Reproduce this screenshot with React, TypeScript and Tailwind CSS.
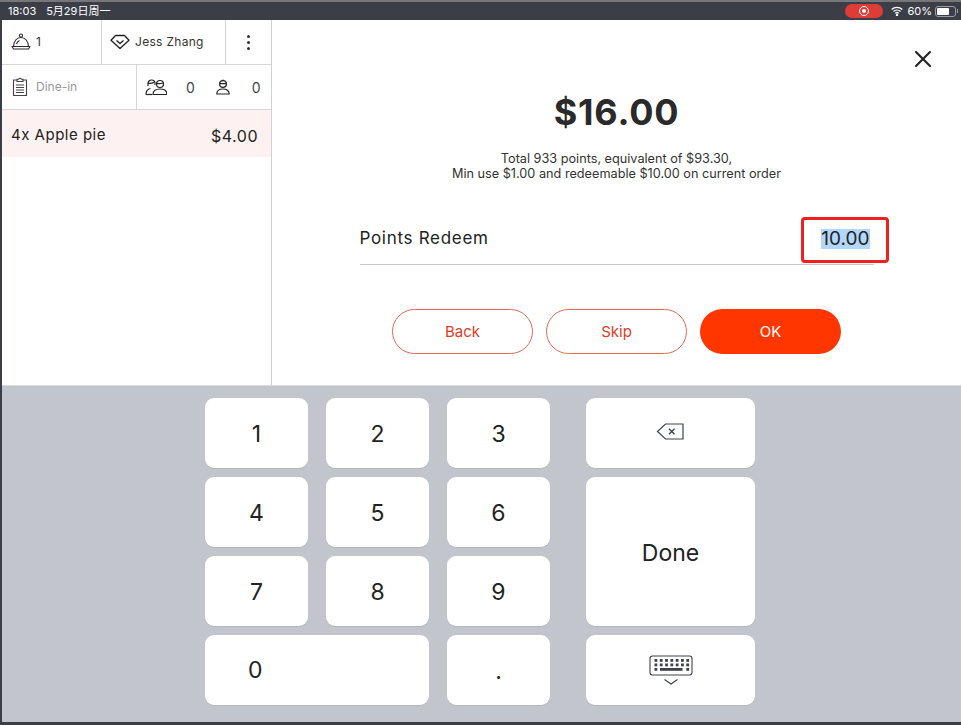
import type { ReactNode } from "react";
import { X } from "lucide-react";

const font = { fontFamily: "Inter, 'Noto Sans CJK SC', sans-serif" };

function Bell() {
  return (
    <svg width="20" height="18" viewBox="0 0 20 18" fill="none" stroke="#2b2b2b" strokeWidth="1.1">
      <circle cx="10" cy="2.6" r="1.6" />
      <path d="M2.5 13.5C3 8 6 4.5 10 4.5s7 3.5 7.5 9" />
      <path d="M1 13.5h18l-1.5 2.5h-15z" strokeLinejoin="round" />
      <path d="M5.5 11c.5-1.8 1.5-3 3-3.6" />
    </svg>
  );
}

function Diamond() {
  return (
    <svg width="20" height="16" viewBox="0 0 20 16" fill="none" stroke="#222" strokeWidth="1.3" strokeLinejoin="round">
      <path d="M5.5 1.5h9l4.5 4.8L10 14.5 1 6.3z" />
      <path d="M6.5 6.5 10 9.5l3.5-3" />
    </svg>
  );
}

function Clipboard() {
  return (
    <svg width="16" height="20" viewBox="0 0 16 20" fill="none" stroke="#444" strokeWidth="1.1">
      <path d="M5 3H1.5v15.5h13V3H11" />
      <path d="M5 3.5V2.2h1.6a1.5 1.5 0 0 1 2.8 0H11v2.3H5z" />
      <path d="M4 8h8M4 10.5h8M4 13h8M4 15.5h8" />
    </svg>
  );
}

function Guests() {
  return (
    <svg width="22" height="17" viewBox="0 0 22 17" fill="none" stroke="#222" strokeWidth="1.2">
      <path d="M3 7V4.5a3.5 3.5 0 0 1 7 0V6" />
      <path d="M3 4.2c2 .3 4 .1 6-1" />
      <path d="M1 15.5c0-3.5 1.5-5.5 4.5-6" />
      <path d="M1 15.5h6" />
      <circle cx="15" cy="5" r="3.5" />
      <path d="M11.7 4.4c1.5.2 4 .2 6.5-.4" />
      <path d="M8 15.5c0-3.5 2.5-5.5 7-5.5s7 2 7 5.5z" strokeLinejoin="round" />
    </svg>
  );
}

function Child() {
  return (
    <svg width="14" height="16" viewBox="0 0 14 16" fill="none" stroke="#222" strokeWidth="1.2">
      <circle cx="7" cy="5" r="3.4" />
      <circle cx="7" cy="1.2" r="0.8" fill="#222" stroke="none" />
      <path d="M3.8 4.4c1.5.3 4.5.3 6.4 0" />
      <path d="M.8 15c0-3.3 2.5-5 6.2-5s6.200 1.700 6.200 5z" strokeLinejoin="round" />
    </svg>
  );
}

function Backspace() {
  return (
    <svg width="28" height="17" viewBox="0 0 28 17" fill="none" stroke="#3d424c" strokeWidth="1.2">
      <path d="M27 1H9.5L1.500 8.500 9.500 16H27z" />
      <path d="M13 5.800l5.500 5.400M18.500 5.800 13 11.200" strokeWidth="1.4" />
    </svg>
  );
}

function KeyboardHide() {
  const rows = [0, 1];
  const cols = [0, 1, 2, 3, 4, 5, 6];
  return (
    <svg width="44" height="31" viewBox="0 0 44 31" fill="none">
      <rect x="1" y="1" width="42" height="19" rx="2.5" stroke="#3d424c" strokeWidth="1.1" />
      {rows.map((r) =>
        cols.map((c) => <rect key={`${r}-${c}`} x={5.5 + c * 5.3} y={4 + r * 4.5} width="2.8" height="2.8" fill="#3d424c" />),
      )}
      <rect x="5.5" y="13" width="2.8" height="2.8" fill="#3d424c" />
      <rect x="11" y="13" width="22.5" height="2.8" fill="#3d424c" />
      <rect x="37.3" y="13" width="2.8" height="2.8" fill="#3d424c" />
      <path d="M15.5 24.500 22 29l6.500-4.500" stroke="#3d424c" strokeWidth="1.1" />
    </svg>
  );
}

function Key({ children, className = "" }: { children: ReactNode; className?: string }) {
  return (
    <div className={`flex items-center justify-center rounded-[9px] bg-white text-[23px] text-[#222] shadow-[0_1px_0_#b4b7be] ${className}`}>
      {children}
    </div>
  );
}

export default function App() {
  return (
    <div className="flex h-[725px] w-[961px] flex-col overflow-hidden bg-[#3b3e47] pb-[3px] pl-[2px]" style={font}>
      {/* Status bar */}
      <div className="-ml-[2px] flex h-[20px] shrink-0 items-center border-t-2 border-[#77777a] bg-[#3b3e47] pl-2 pr-[3px] text-[11px] text-white">
        <span className="mr-[10px]">18:03</span>
        <span>5月29日周一</span>
        <div className="ml-auto flex items-center">
          <div className="flex h-[14px] w-[38px] items-center justify-center rounded-full bg-[#de3c36]">
            <div className="flex h-[10px] w-[10px] items-center justify-center rounded-full border border-white">
              <div className="h-1 w-1 rounded-full bg-white" />
            </div>
          </div>
          <svg className="ml-[8px]" width="12" height="10" viewBox="0 0 12 10" fill="none" stroke="#fff" strokeWidth="1.3">
            <path d="M.7 3.5a7.5 7.5 0 0 1 10.6 0M2.500 5.500a5 5 0 0 1 7 0M4.300 7.300a2.500 2.500 0 0 1 3.400 0" />
            <circle cx="6" cy="9" r=".6" fill="#fff" />
          </svg>
          <span className="ml-[4px] text-[11px]">60%</span>
          <div className="ml-[3px] flex h-[11px] w-[21px] items-center rounded-[3px] border border-[#9a9ca2] p-px">
            <div className="h-full w-[12px] rounded-[1px] bg-white" />
          </div>
          <div className="ml-px h-1 w-px bg-[#9a9ca2]" />
        </div>
      </div>

      {/* Order and redeem */}
      <div className="flex h-[365px] shrink-0 bg-white">
        <div className="flex w-[270px] shrink-0 flex-col border-r border-[#cfd1d5]">
          <div className="flex h-[45px] border-b border-[#d5d6da] text-[12px] text-[#333]">
            <div className="flex w-[100px] items-center gap-[5px] border-r border-[#d5d6da] pl-[9px]">
              <Bell />
              <span>1</span>
            </div>
            <div className="flex w-[124px] items-center gap-[5px] border-r border-[#d5d6da] pl-[8px] tracking-[0.3px]">
              <Diamond />
              <span>Jess Zhang</span>
            </div>
            <div className="flex flex-1 flex-col items-center justify-center gap-[3px]">
              <div className="h-[3px] w-[3px] rounded-full bg-[#333]" />
              <div className="h-[3px] w-[3px] rounded-full bg-[#333]" />
              <div className="h-[3px] w-[3px] rounded-full bg-[#333]" />
            </div>
          </div>
          <div className="flex h-[45px] border-b border-[#d5d6da] text-[14px] text-[#444]">
            <div className="flex w-[135px] items-center gap-[8px] border-r border-[#d5d6da] pl-[10px] text-[12px] text-[#999]">
              <Clipboard />
              <span>Dine-in</span>
            </div>
            <div className="flex flex-1 items-center pl-[8px]">
              <Guests />
              <span className="ml-[19px]">0</span>
              <div className="ml-[21px] flex">
                <Child />
              </div>
              <span className="ml-[22px]">0</span>
            </div>
          </div>
          <div className="flex h-[47px] items-center justify-between bg-[#fdf2f1] pl-[9px] pr-[13px] text-[15px] tracking-[0.5px] text-[#222]">
            <span className="mt-[3px]">4x Apple pie</span>
            <span className="mt-[5px] text-[16px]">$4.00</span>
          </div>
        </div>

        <div className="relative flex flex-1 flex-col items-center pt-[69px]">
          <button className="absolute right-[24px] top-[25px] text-[#222]">
            <X size={28} strokeWidth={1.8} />
          </button>
          <div className="text-[36px] font-bold leading-[46px] tracking-[0.8px] text-[#2a2a2a]">$16.00</div>
          <p className="mt-[16px] text-center text-[12.7px] leading-[15px] text-[#333]">
            Total 933 points, equivalent of $93.30,
            <br />
            Min use $1.00 and redeemable $10.00 on current order
          </p>
          <div className="relative mt-[33px] flex h-[51px] w-[514px] items-center justify-between self-center border-b border-[#c8c9ce] pb-[1px] text-[17px] tracking-[0.7px] text-[#222]">
            <span>Points Redeem</span>
            <span className="mr-[4px] bg-[#b3d7fb] text-[19px] leading-[20px] tracking-normal">10.00</span>
            <div className="absolute top-[3px] left-[441px] h-[46px] w-[88px] rounded-[4px] border-[3px] border-[#f02020]" />
          </div>
          <div className="mt-[44px] flex gap-[13px] text-[15px]">
            <button className="h-[45px] w-[141px] rounded-full border border-[#e56a55] pt-[2px] text-[#d9401f]">Back</button>
            <button className="h-[45px] w-[141px] rounded-full border border-[#e56a55] pt-[2px] text-[#d9401f]">Skip</button>
            <button className="h-[45px] w-[141px] rounded-full bg-[#ff3600] pt-[2px] text-white">OK</button>
          </div>
        </div>
      </div>

      {/* Keypad */}
      <div className="flex-1 border-t border-[#d9dade] bg-[#c2c5cc] pl-[203px] pt-[12px]">
        <div className="grid grid-cols-[103px_103px_103px_187px] grid-rows-[70px_70px_70px_70px] gap-x-[18px] gap-y-[9px]">
          <Key className="pt-[2px]">1</Key>
          <Key className="pt-[2px]">2</Key>
          <Key className="pt-[2px]">3</Key>
          <Key className="ml-[18px] pb-[4px] pr-[2px]">
            <Backspace />
          </Key>
          <Key className="pt-[2px]">4</Key>
          <Key className="pt-[2px]">5</Key>
          <Key className="pt-[2px]">6</Key>
          <Key className="ml-[18px] row-span-2 pt-[3px] text-[20px]">Done</Key>
          <Key className="pt-[2px]">7</Key>
          <Key className="pt-[2px]">8</Key>
          <Key className="pt-[2px]">9</Key>
          <Key className="col-span-2 justify-start pl-[43px]">0</Key>
          <Key className="pt-[2px]">.</Key>
          <Key className="ml-[18px]">
            <KeyboardHide />
          </Key>
        </div>
      </div>
    </div>
  );
}
